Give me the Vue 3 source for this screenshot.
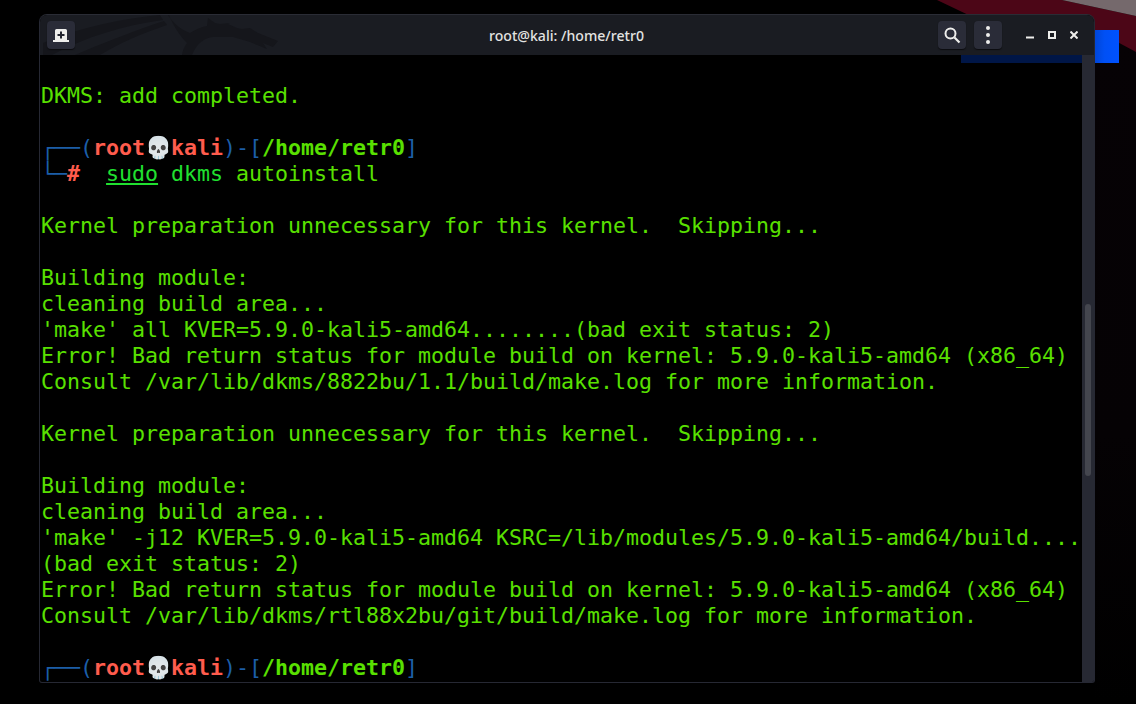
<script setup>
const plain = (text) => [{ text, cls: 'out' }]
const prompt = [
  { text: '┌──(', cls: 'blue' },
  { text: 'root', cls: 'red' },
  { text: '💀', cls: 'skull' },
  { text: 'kali', cls: 'red' },
  { text: ')-[', cls: 'blue' },
  { text: '/home/retr0', cls: 'path' },
  { text: ']', cls: 'blue' },
]
const lines = [
  plain(''),
  plain('DKMS: add completed.'),
  plain(''),
  prompt,
  [
    { text: '└─', cls: 'blue' },
    { text: '# ', cls: 'red' },
    { text: ' ', cls: 'out' },
    { text: 'sudo', cls: 'cmd ul' },
    { text: ' ', cls: 'out' },
    { text: 'dkms', cls: 'cmd' },
    { text: ' autoinstall', cls: 'out' },
  ],
  plain(''),
  plain('Kernel preparation unnecessary for this kernel.  Skipping...'),
  plain(''),
  plain('Building module:'),
  plain('cleaning build area...'),
  plain("'make' all KVER=5.9.0-kali5-amd64........(bad exit status: 2)"),
  plain('Error! Bad return status for module build on kernel: 5.9.0-kali5-amd64 (x86_64)'),
  plain('Consult /var/lib/dkms/8822bu/1.1/build/make.log for more information.'),
  plain(''),
  plain('Kernel preparation unnecessary for this kernel.  Skipping...'),
  plain(''),
  plain('Building module:'),
  plain('cleaning build area...'),
  plain("'make' -j12 KVER=5.9.0-kali5-amd64 KSRC=/lib/modules/5.9.0-kali5-amd64/build...."),
  plain('(bad exit status: 2)'),
  plain('Error! Bad return status for module build on kernel: 5.9.0-kali5-amd64 (x86_64)'),
  plain('Consult /var/lib/dkms/rtl88x2bu/git/build/make.log for more information.'),
  plain(''),
  prompt,
]
</script>

<template>
  <div class="desktop">
    <svg class="wallpaper" width="1136" height="704" viewBox="0 0 1136 704">
      <defs>
        <linearGradient id="blueRect" x1="0" y1="0" x2="1" y2="0">
          <stop offset="0" stop-color="#0046d8" />
          <stop offset="0.4" stop-color="#0050f5" />
          <stop offset="1" stop-color="#0052ff" />
        </linearGradient>
        <linearGradient id="fade" x1="0" y1="0" x2="0" y2="1">
          <stop offset="0" stop-color="#060205" />
          <stop offset="0.6" stop-color="#050204" />
          <stop offset="1" stop-color="#000000" />
        </linearGradient>
      </defs>
      <rect width="1136" height="704" fill="#000" />
      <rect x="1095" y="30" width="41" height="674" fill="url(#fade)" />
      <polygon points="937,0 1062,0 1136,16 1136,52 1095,30 1000,30" fill="#4c0617" />
      <polygon points="1062,0 1136,0 1136,16" fill="#75696c" />
      <rect x="1095" y="30" width="24" height="33" fill="url(#blueRect)" />
    </svg>

    <section class="window">
      <header class="titlebar">
        <svg class="dragon" width="300" height="40" viewBox="0 0 300 40">
          <path d="M3 28C40 12 85 3 120 0l3 5C85 10 45 22 12 40H3Z" />
          <path d="M35 40C70 25 105 12 124 6l3 4C100 19 78 29 60 40Z" />
          <path d="M120 0h8c5 8 12 14 22 18 5-3 11-6 17-7l1-8 7 5 5 1 10-1-2 1 9 4 5 1 8-1 3 2 5 3 20 8-5 6-10-4 4 6-17-7-17-5h-20c-9 1-16 6-21 18h-10c1-6 3-9 5-12-8-8-14-18-18-28Z" />
        </svg>
        <button class="btn">
          <svg width="18" height="16" viewBox="0 0 18 16">
            <path d="M3 13V3.500Q3 2 4.500 2h9Q15 2 15 3.500V13h2v2H1v-2Z" fill="#eeeeec" />
            <path d="M8 4.500h2V7h2.500v2H10v2.500H8V9H5.500V7H8Z" fill="#23252f" />
          </svg>
        </button>
        <h1 class="title">root@kali: /home/retr0</h1>
        <div class="actions">
          <button class="btn">
            <svg width="18" height="18" viewBox="0 0 18 18" fill="none" stroke="#eeeeec">
              <circle cx="7.500" cy="7.500" r="5" stroke-width="2" />
              <path d="M11.500 11.500L16.500 16.500" stroke-width="2.200" />
            </svg>
          </button>
          <button class="btn">
            <svg width="6" height="20" viewBox="0 0 6 20" fill="#eeeeec">
              <circle cx="3" cy="3" r="2" />
              <circle cx="3" cy="10" r="2" />
              <circle cx="3" cy="17" r="2" />
            </svg>
          </button>
        </div>
        <div class="controls">
          <svg width="8" height="8" viewBox="0 0 8 8"><rect y="5.500" width="8" height="2" fill="#eeeeec" /></svg>
          <svg width="8" height="8" viewBox="0 0 8 8" fill="none"><rect x="1" y="1" width="6" height="6" stroke="#eeeeec" stroke-width="2" /></svg>
          <svg width="8" height="8" viewBox="0 0 8 8"><path d="M0.500 0.500L7.500 7.500M7.500 0.500L0.500 7.500" stroke="#eeeeec" stroke-width="2" /></svg>
        </div>
      </header>
      <div class="body">
        <div class="terminal">
          <div class="strip"></div>
          <div v-for="(line, i) in lines" :key="i" class="row">
            <span v-for="(seg, j) in line" :key="j" :class="seg.cls">{{ seg.text }}</span>
          </div>
        </div>
        <div class="scrollbar"><div class="thumb"></div></div>
      </div>
    </section>
  </div>
</template>

<style scoped>
.desktop {
  position: relative;
  width: 1136px;
  height: 704px;
  background: #000;
  overflow: hidden;
  padding: 14px 0 0 39px;
  box-sizing: border-box;
}
.wallpaper {
  position: absolute;
  left: 0;
  top: 0;
}
.window {
  position: relative;
  width: 1056px;
  height: 669px;
  display: flex;
  flex-direction: column;
  border-radius: 8px 8px 3px 3px;
  overflow: hidden;
  background: #000;
  border: 1px solid #262833;
  border-top-color: #2a2c35;
  box-sizing: border-box;
}
.titlebar {
  position: relative;
  flex: 0 0 40px;
  display: flex;
  align-items: center;
  padding: 0 16px 0 7px;
  background: #1a1c22;
  overflow: hidden;
}
.dragon {
  position: absolute;
  left: 0;
  top: 0;
  fill: #15161b;
}
.btn {
  position: relative;
  width: 28px;
  height: 28px;
  display: flex;
  align-items: center;
  justify-content: center;
  padding: 0;
  border: 0;
  border-radius: 4px;
  background: #2a2c38;
  box-shadow: 0 1px 1px #0c0d10;
}
.title {
  position: absolute;
  left: 449px;
  width: 155px;
  margin: 0;
  text-align: center;
  white-space: nowrap;
  font: 500 14.100px "Noto Sans", sans-serif;
  color: #e3e3e1;
}
.actions {
  position: relative;
  display: flex;
  gap: 8px;
  margin-left: auto;
}
.controls {
  position: relative;
  display: flex;
  gap: 14px;
  margin-left: 24px;
}
.body {
  flex: 1;
  display: flex;
  min-height: 0;
}
.terminal {
  position: relative;
  flex: 1;
  min-width: 0;
  padding: 2px 0 0 1px;
  overflow: hidden;
  font-family: "DejaVu Sans Mono", monospace;
  font-size: 21.600px;
  line-height: 26px;
  white-space: pre;
  color: #59e000;
}
.strip {
  position: absolute;
  right: 0;
  top: 0;
  width: 121px;
  height: 8px;
  background: #001647;
}
.row {
  position: relative;
  height: 26px;
}
.blue { color: #1c5ea8; }
.red { color: #ff5c4d; font-weight: 700; }
.skull { display: inline-block; width: 26px; text-align: center; }
.path { color: #59e000; font-weight: 700; }
.cmd { color: #20e030; }
.ul { text-decoration: underline; }
.scrollbar {
  flex: 0 0 12px;
  background: #272933;
  display: flex;
  justify-content: center;
}
.thumb {
  width: 6px;
  height: 172px;
  margin-top: 249px;
  border-radius: 3px;
  background: #44464e;
}
</style>

<style>
html, body { margin: 0; background: #000; overflow: hidden; }
</style>
